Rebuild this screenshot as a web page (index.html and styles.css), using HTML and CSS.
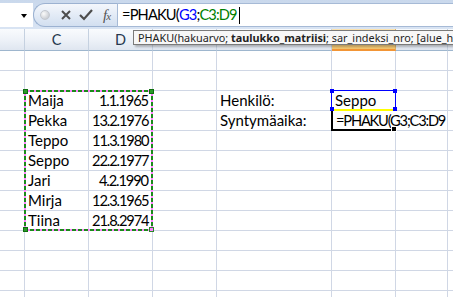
FILE: index.html
```html
<!DOCTYPE html>
<html>
<head>
<meta charset="utf-8">
<link rel="stylesheet" href="styles.css">
</head>
<body>
<div class="fbar">
  <div class="namebox"><span class="dd"></span></div>
  <div class="btns">
    <span class="knob"></span>
    <svg class="ico" width="12" height="12" viewBox="0 0 12 12"><path d="M2 2 L10 10 M10 2 L2 10" stroke="#4d4d4d" stroke-width="2" fill="none"/></svg>
    <svg class="ico" width="14" height="12" viewBox="0 0 14 12"><path d="M1 6 L5 10 L13 1" stroke="#4d4d4d" stroke-width="2.2" fill="none"/></svg>
    <span class="fx">f<span class="fxx">x</span></span>
  </div>
  <div class="formula">=PHAKU(<span class="rb">G3</span>;<span class="rg">C3:D9</span><span class="caret"></span></div>
</div>

<div class="sheet">
  <div class="row head">
    <div class="c"></div><div class="c">C</div><div class="c">D</div><div class="c">E</div><div class="c">F</div><div class="c sel">G</div><div class="c">H</div><div class="c"></div>
  </div>
  <div class="row"><div class="c"></div><div class="c"></div><div class="c"></div><div class="c"></div><div class="c"></div><div class="c"></div><div class="c"></div><div class="c"></div></div>
  <div class="row"><div class="c"></div><div class="c"></div><div class="c"></div><div class="c"></div><div class="c"></div><div class="c"></div><div class="c"></div><div class="c"></div></div>
  <div class="row"><div class="c"></div><div class="c">Maija</div><div class="c r">1.1.1965</div><div class="c"></div><div class="c">Henkilö:</div><div class="c">Seppo</div><div class="c"></div><div class="c"></div></div>
  <div class="row"><div class="c"></div><div class="c">Pekka</div><div class="c r">13.2.1976</div><div class="c"></div><div class="c">Syntymäaika:</div><div class="c edit">=PHAKU(G3;C3:D9</div><div class="c"></div><div class="c"></div></div>
  <div class="row"><div class="c"></div><div class="c">Teppo</div><div class="c r">11.3.1980</div><div class="c"></div><div class="c"></div><div class="c"></div><div class="c"></div><div class="c"></div></div>
  <div class="row"><div class="c"></div><div class="c">Seppo</div><div class="c r">22.2.1977</div><div class="c"></div><div class="c"></div><div class="c"></div><div class="c"></div><div class="c"></div></div>
  <div class="row"><div class="c"></div><div class="c">Jari</div><div class="c r">4.2.1990</div><div class="c"></div><div class="c"></div><div class="c"></div><div class="c"></div><div class="c"></div></div>
  <div class="row"><div class="c"></div><div class="c">Mirja</div><div class="c r">12.3.1965</div><div class="c"></div><div class="c"></div><div class="c"></div><div class="c"></div><div class="c"></div></div>
  <div class="row"><div class="c"></div><div class="c">Tiina</div><div class="c r">21.8.2974</div><div class="c"></div><div class="c"></div><div class="c"></div><div class="c"></div><div class="c"></div></div>
  <div class="row"><div class="c"></div><div class="c"></div><div class="c"></div><div class="c"></div><div class="c"></div><div class="c"></div><div class="c"></div><div class="c"></div></div>
  <div class="row"><div class="c"></div><div class="c"></div><div class="c"></div><div class="c"></div><div class="c"></div><div class="c"></div><div class="c"></div><div class="c"></div></div>
  <div class="row"><div class="c"></div><div class="c"></div><div class="c"></div><div class="c"></div><div class="c"></div><div class="c"></div><div class="c"></div><div class="c"></div></div>
  <div class="row"><div class="c"></div><div class="c"></div><div class="c"></div><div class="c"></div><div class="c"></div><div class="c"></div><div class="c"></div><div class="c"></div></div>
</div>

<div class="tip">PHAKU(hakuarvo; <b>taulukko_matriisi</b>; sar_indeksi_nro; [alue_haku])</div>

<div class="marquee">
  <span class="e et"></span><span class="e eb"></span><span class="e el"></span><span class="e er"></span>
  <span class="h tl"></span><span class="h tr"></span><span class="h bl"></span><span class="h br"></span>
</div>

<div class="refsel">
  <span class="bh a"></span><span class="bh b"></span><span class="bh c2"></span><span class="bh d"></span>
</div>
<div class="active"><span class="fill"></span></div>
</body>
</html>
```

FILE: styles.css
```css
html, body {
  margin: 0;
  padding: 0;
}
body {
  width: 453px;
  height: 297px;
  overflow: hidden;
  position: relative;
  background: #fff;
  font-family: Lato, "Liberation Sans", sans-serif;
}

/* formula bar */
.fbar {
  display: flex;
  height: 29px;
  box-sizing: border-box;
  padding: 3px 0 2px 0;
  background: linear-gradient(#c9d8ec, #d9e4f3);
}
.namebox {
  width: 33px;
  background: #fff;
  display: flex;
  align-items: center;
  justify-content: flex-end;
  padding-right: 6px;
  box-sizing: border-box;
}
.dd {
  width: 0;
  height: 0;
  border-top: 4px solid #000;
  border-left: 3.5px solid transparent;
  border-right: 3.5px solid transparent;
  margin-top: 2px;
}
.btns {
  width: 84px;
  box-sizing: border-box;
  border: 1px solid #9cb2d1;
  border-right: none;
  border-radius: 12px 0 0 12px;
  background: linear-gradient(#f4f7fc 0%, #e3ebf6 50%, #d2dff0 100%);
  display: flex;
  align-items: center;
  padding-left: 6px;
  gap: 7px;
}
.knob {
  width: 8px;
  height: 8px;
  border-radius: 50%;
  background: radial-gradient(circle at 35% 35%, #fafafa, #b9bec6);
  border: 1px solid #c3c8d0;
  margin-right: 3px;
}
.ico { display: block; }
.fx {
  font-family: "Liberation Serif", serif;
  font-style: italic;
  font-size: 15px;
  color: #555;
  margin-left: 3px;
  letter-spacing: -1px;
}
.fxx { font-size: 11px; }
.formula {
  flex: 1;
  background: #fff;
  border: 1px solid #a6bad6;
  border-right: none;
  padding-left: 4px;
  font-size: 14.67px;
  letter-spacing: -0.85px;
  line-height: 22px;
  color: #000;
  white-space: nowrap;
  display: flex;
  align-items: center;
}
.rb { color: #0000ff; }
.rg { color: #008000; }
.caret {
  display: inline-block;
  width: 1px;
  height: 17px;
  background: #000;
  margin-left: 2px;
}

/* sheet grid */
.row {
  display: grid;
  grid-template-columns: 25px 64px 64px 64px 115px 64px 52px 1fr;
  height: 20px;
}
.c {
  box-sizing: border-box;
  border-right: 1px solid #d0d7e5;
  border-bottom: 1px solid #d0d7e5;
  padding: 0 3px;
  font-size: 15px;
  line-height: 19px;
  white-space: nowrap;
  color: #000;
  min-width: 0;
}
.c.r {
  text-align: right;
  padding-right: 4px;
  font-size: 14.67px;
  letter-spacing: -1.1px;
}
.c.edit {
  overflow: visible;
  border-right-color: transparent;
  position: relative;
  z-index: 1;
  font-size: 14.67px;
  letter-spacing: -1.2px;
  padding-left: 4px;
}
.head {
  height: 22px;
}
.head .c {
  background: linear-gradient(#f9fbfd 0%, #eef2f8 50%, #dfe6f0 100%);
  border-right: 1px solid #c5d1e0;
  border-bottom: 1px solid #9eb6ce;
  text-align: center;
  font-size: 14.5px;
  line-height: 21px;
  color: #27384e;
}
.head .c.sel {
  background: linear-gradient(#fbe3b0 0%, #f8d593 50%, #f3c66d 100%);
  border-bottom: 2px solid #f29536;
  border-right-color: #d7b26b;
  line-height: 20px;
}

/* function tooltip */
.tip {
  position: absolute;
  left: 133px;
  top: 30px;
  width: 340px;
  height: 15px;
  box-sizing: border-box;
  border: 1px solid #7a7a7a;
  background: #f7f7f7;
  box-shadow: 2px 2px 2px rgba(0,0,0,0.25);
  font-family: "Noto Sans", "Open Sans", sans-serif;
  font-size: 10.85px;
  line-height: 13px;
  padding-left: 4px;
  color: #222;
  white-space: nowrap;
  overflow: hidden;
  z-index: 3;
}
.tip b { font-weight: 700; }

/* copy marquee around C3:D9 */
.marquee {
  position: absolute;
  left: 24px;
  top: 90px;
  width: 129px;
  height: 141px;
  z-index: 2;
}
.e {
  position: absolute;
}
.et, .eb {
  left: 0;
  right: 0;
  height: 2px;
  background: repeating-linear-gradient(90deg, #1b8a1b 0 4px, #ff80ff 4px 6px);
}
.et { top: 0; }
.eb { bottom: 0; }
.el, .er {
  top: 0;
  bottom: 0;
  width: 2px;
  background: repeating-linear-gradient(180deg, #1b8a1b 0 4px, #ff80ff 4px 6px);
}
.el { left: 0; }
.er { right: 0; }
.h {
  position: absolute;
  width: 5px;
  height: 5px;
  box-sizing: border-box;
  background: #2a9a2a;
  border: 1px solid #0f6f0f;
}
.tl { left: -1px; top: -1px; }
.tr { right: -1px; top: -1px; }
.bl { left: -1px; bottom: -1px; }
.br { right: -1px; bottom: -1px; background: #ff80ff; border-color: #2a8a2a; }

/* reference highlight on G3 */
.refsel {
  position: absolute;
  left: 331px;
  top: 90px;
  width: 65px;
  height: 21px;
  box-sizing: border-box;
  border: 1px solid #0000ff;
  border-bottom: 2px solid #ffff00;
  z-index: 2;
}
.bh {
  position: absolute;
  width: 4px;
  height: 4px;
  background: #0000ff;
}
.bh.a { left: -2px; top: -2px; }
.bh.b { right: -2px; top: -2px; }
.bh.c2 { left: -2px; bottom: -2px; }
.bh.d { right: -2px; bottom: -2px; }

/* active cell G4 */
.active {
  position: absolute;
  left: 331px;
  top: 111px;
  width: 63px;
  height: 20px;
  box-sizing: border-box;
  border-left: 2px solid #000;
  border-bottom: 2px solid #000;
  z-index: 2;
}
.fill {
  position: absolute;
  right: -3px;
  bottom: -3px;
  width: 4px;
  height: 4px;
  background: #000;
  border: 1px solid #fff;
  box-sizing: content-box;
}
```
